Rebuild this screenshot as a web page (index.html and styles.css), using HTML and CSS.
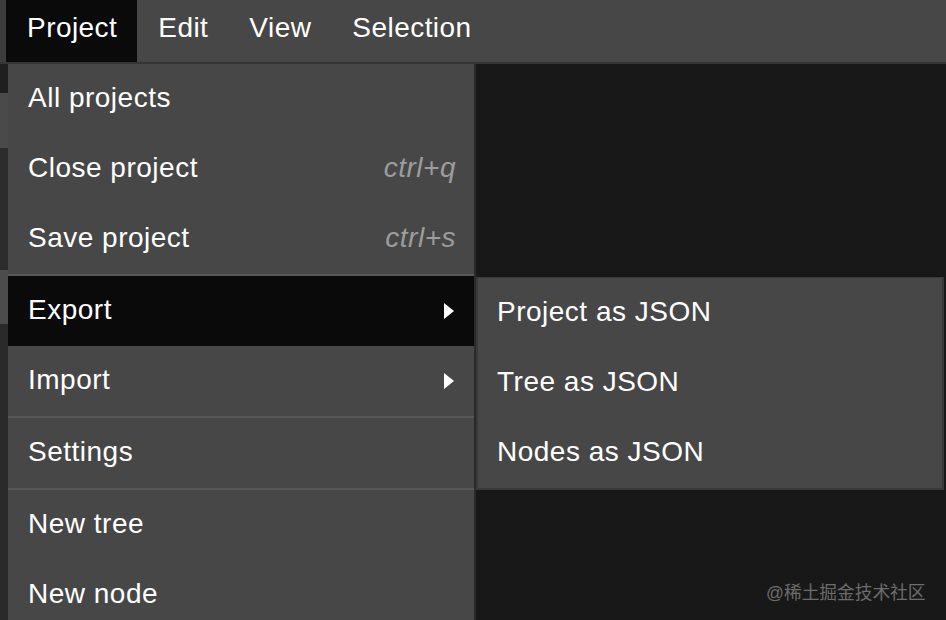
FILE: index.html
```html
<!DOCTYPE html>
<html>
<head>
<meta charset="utf-8">
<link rel="stylesheet" href="styles.css">
</head>
<body>
<div class="app">
  <nav class="topbar">
    <div class="top-item active">Project</div>
    <div class="top-item">Edit</div>
    <div class="top-item">View</div>
    <div class="top-item">Selection</div>
  </nav>
  <div class="workspace">
    <div class="side-strip"></div>
    <ul class="menu">
      <li class="menu-item"><span>All projects</span></li>
      <li class="menu-item"><span>Close project</span><span class="shortcut">ctrl+q</span></li>
      <li class="menu-item"><span>Save project</span><span class="shortcut">ctrl+s</span></li>
      <li class="separator"></li>
      <li class="menu-item has-sub active"><span>Export</span><span class="arrow"></span>
        <ul class="submenu">
          <li class="menu-item"><span>Project as JSON</span></li>
          <li class="menu-item"><span>Tree as JSON</span></li>
          <li class="menu-item"><span>Nodes as JSON</span></li>
        </ul>
      </li>
      <li class="menu-item has-sub"><span>Import</span><span class="arrow"></span></li>
      <li class="separator"></li>
      <li class="menu-item"><span>Settings</span></li>
      <li class="separator"></li>
      <li class="menu-item"><span>New tree</span></li>
      <li class="menu-item"><span>New node</span></li>
    </ul>
    <div class="canvas"></div>
  </div>
  <div class="watermark">@稀土掘金技术社区</div>
</div>
</body>
</html>
```
FILE: styles.css
```css
* { box-sizing: border-box; }
html, body {
  margin: 0;
  padding: 0;
  width: 946px;
  height: 620px;
  overflow: hidden;
  background: #181818;
  font-family: "Liberation Sans", Arial, "Noto Sans CJK SC", sans-serif;
  color: #ffffff;
}
.app {
  position: relative;
  width: 946px;
  height: 620px;
  display: flex;
  flex-direction: column;
}
.topbar {
  display: flex;
  height: 64px;
  flex: none;
  background: #474747;
  border-bottom: 2px solid #353535;
  padding-left: 6px;
  background-image: linear-gradient(to right, #3c3c3c 0, #3c3c3c 6px, transparent 6px);
}
.top-item {
  height: 62px;
  padding: 0 20px 0 21px;
  font-size: 28px;
  letter-spacing: 0.45px;
  line-height: 56px;
}
.top-item.active { background: #0a0a0a; }
.workspace {
  flex: 1;
  display: flex;
  min-height: 0;
}
.side-strip {
  width: 8px;
  flex: none;
  background: linear-gradient(to bottom,
    #1f1f1f 0, #1f1f1f 29px,
    #4a4a4a 29px, #4a4a4a 84px,
    #2c2c2c 84px, #2c2c2c 206px,
    #4c4c4c 206px, #4c4c4c 260px,
    #2a2a2a 260px, #2a2a2a 100%);
}
.menu {
  list-style: none;
  margin: 0;
  padding: 0;
  width: 468px;
  flex: none;
  background: #474747;
  border-right: 2px solid #2a2a2a;
}
.menu-item {
  position: relative;
  display: flex;
  justify-content: space-between;
  align-items: center;
  height: 70px;
  padding: 0 18px 2px 20px;
  font-size: 28px;
  letter-spacing: 0.5px;
  line-height: 68px;
  white-space: nowrap;
}
.menu-item.active { background: #0a0a0a; }
.shortcut {
  color: #9c9c9c;
  font-style: italic;
}
.arrow {
  width: 0;
  height: 0;
  margin-top: 2px;
  margin-right: 2px;
  border-top: 8px solid transparent;
  border-bottom: 8px solid transparent;
  border-left: 10px solid #ffffff;
}
.separator {
  height: 2px;
  background: #575757;
}
.submenu {
  position: absolute;
  top: 1px;
  left: calc(100% + 2px);
  width: 468px;
  margin: 0;
  padding: 0;
  list-style: none;
  background: #474747;
  border: 2px solid #393939;
  border-top-width: 1px;
}
.submenu .menu-item { padding-left: 19px; }
.canvas { flex: 1; background: #181818; }
.watermark {
  position: absolute;
  left: 766px;
  top: 578px;
  font-size: 17.7px;
  color: #6c6c6c;
  font-family: "Liberation Sans", "Noto Sans CJK SC", sans-serif;
}
```
